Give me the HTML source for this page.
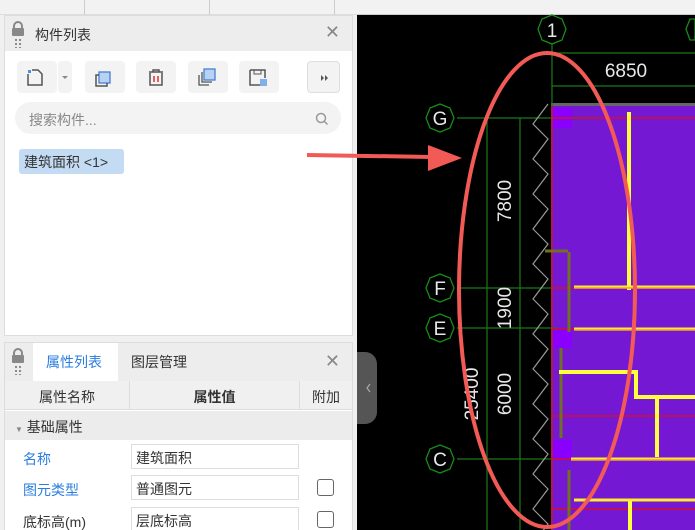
<!DOCTYPE html>
<html><head><meta charset="utf-8"><style>
*{box-sizing:border-box;margin:0;padding:0}
html,body{width:695px;height:530px;overflow:hidden}
body{background:#000;font-family:"Liberation Sans","Noto Sans CJK SC",sans-serif;position:relative;font-size:14px;color:#333}
.top{position:absolute;left:0;top:0;width:357px;height:15px;background:#f2f2f2;border-bottom:1px solid #ddd}
.top2{position:absolute;left:357px;top:0;width:338px;height:15px;background:#f2f2f2;border-bottom:1px solid #ccc}
.leftbg{position:absolute;left:0;top:15px;width:357px;height:515px;background:#f0f0f0}
.panel{position:absolute;left:4px;background:#fff;border:1px solid #ddd;overflow:hidden}
.hdr{height:35px;background:#ededed;position:relative}
.btn{position:absolute;top:45px;width:40px;height:32px;background:#f3f3f3;border-radius:4px}
.x{position:absolute;right:12px;font-size:18px;color:#888}
</style></head><body>
<div class="top"><div style="position:absolute;left:84px;top:0;width:1px;height:15px;background:#ccc"></div><div style="position:absolute;left:209px;top:0;width:1px;height:15px;background:#ccc"></div><div style="position:absolute;left:334px;top:0;width:1px;height:15px;background:#ccc"></div></div>
<div class="top2"></div>
<div class="leftbg"></div>
<div class="panel" style="top:15px;width:349px;height:321px">
 <div class="hdr">
  <div style="position:absolute;left:8px;top:5px;width:10px;height:8px;border:2px solid #888;border-bottom:none;border-radius:5px 5px 0 0"></div>
  <div style="position:absolute;left:7px;top:12px;width:12px;height:8px;background:#888;border-radius:1px"></div>
  <div style="position:absolute;left:9px;top:22px;width:9px;height:10px;background:radial-gradient(circle,#888 1px,transparent 1.3px) 0 0/4px 4px"></div>
  <div style="position:absolute;left:30px;top:9px;font-size:14px;color:#333">构件列表</div>
  <div class="x" style="top:6px">✕</div>
 </div>
 <div class="btn" style="left:12px;width:40px"><svg width="40" height="32"><rect x="11" y="9" width="3" height="3" fill="#4a90e2"/><path d="M11 13V24H25V13L21 9H15" fill="none" stroke="#555" stroke-width="1.5"/></svg></div>
 <div class="btn" style="left:53px;width:14px"><svg width="14" height="32"><path d="M4 15h6l-3 3z" fill="#888"/></svg></div>
 <div class="btn" style="left:80px"><svg width="40" height="32"><rect x="14" y="11" width="11" height="11" fill="#b8d2f5" stroke="#4a7fd0" stroke-width="1.3"/><path d="M14 14h-3v11h11v-3" fill="none" stroke="#555" stroke-width="1.5"/></svg></div>
 <div class="btn" style="left:131px"><svg width="40" height="32"><path d="M13 11h14M17 11v-2h6v2M14 12v12h12V12" fill="none" stroke="#555" stroke-width="1.5"/><path d="M18 15v6M22 15v6" stroke="#e03030" stroke-width="1.5"/></svg></div>
 <div class="btn" style="left:183px"><svg width="40" height="32"><rect x="16" y="8" width="11" height="11" fill="#b8d2f5" stroke="#4a7fd0" stroke-width="1.3"/><path d="M14 11v10h10M11 14v10h10" fill="none" stroke="#555" stroke-width="1.3"/></svg></div>
 <div class="btn" style="left:234px"><svg width="40" height="32"><path d="M11 9h15v8M11 9v15h10" fill="none" stroke="#555" stroke-width="1.5"/><rect x="15" y="9" width="7" height="4" fill="none" stroke="#555"/><rect x="21" y="18" width="7" height="7" fill="#7fb0ea"/></svg></div>
 <div class="btn" style="left:302px;width:33px;border:1px solid #ddd"><svg width="33" height="32"><path d="M13 13l3 3-3 3zM17 13l3 3-3 3z" fill="#555"/></svg></div>
 <div style="position:absolute;left:10px;top:86px;width:326px;height:32px;background:#f3f3f3;border-radius:16px"><span style="position:absolute;left:14px;top:8px;color:#888;font-size:14px">搜索构件...</span><svg style="position:absolute;right:12px;top:10px" width="14" height="14"><circle cx="6" cy="6" r="4.5" fill="none" stroke="#999" stroke-width="1.5"/><path d="M9.5 9.5l3 3" stroke="#999" stroke-width="1.5"/></svg></div>
 <div style="position:absolute;left:14px;top:133px;width:105px;height:25px;background:#c3dbf3;border-radius:3px;font-size:14px;padding:3px 0 0 5px;color:#333">建筑面积 &lt;1&gt;</div>
</div>
<div class="panel" style="top:342px;width:349px;height:188px;border-bottom:none">
 <div class="hdr" style="height:38px">
  <div style="position:absolute;left:8px;top:5px;width:10px;height:8px;border:2px solid #888;border-bottom:none;border-radius:5px 5px 0 0"></div>
  <div style="position:absolute;left:7px;top:12px;width:12px;height:8px;background:#888;border-radius:1px"></div>
  <div style="position:absolute;left:9px;top:22px;width:9px;height:10px;background:radial-gradient(circle,#888 1px,transparent 1.3px) 0 0/4px 4px"></div>
  <div style="position:absolute;left:28px;top:0;width:85px;height:38px;background:#fff;color:#2a7de1;padding:9px 0 0 13px">属性列表</div>
  <div style="position:absolute;left:126px;top:9px">图层管理</div>
  <div class="x" style="top:8px">✕</div>
 </div>
 <div style="position:absolute;left:0;top:38px;width:347px;height:29px;background:#f0f0f0;border-bottom:1px solid #ddd">
  <div style="position:absolute;left:0;width:125px;height:29px;border-right:1px solid #ddd;text-align:center;padding-top:6px">属性名称</div>
  <div style="position:absolute;left:125px;width:170px;height:29px;border-right:1px solid #ddd;text-align:center;padding-top:6px;font-weight:bold">属性值</div>
  <div style="position:absolute;left:295px;width:52px;text-align:center;padding-top:6px">附加</div>
 </div>
 <div style="position:absolute;left:0;top:68px;width:347px;height:29px;background:#ececec;padding:6px 0 0 10px"><span style="font-size:8px;color:#888">▼</span> 基础属性</div>
 <div style="position:absolute;left:18px;top:106px;color:#2a7de1">名称</div>
 <div style="position:absolute;left:126px;top:101px;width:168px;height:25px;border:1px solid #ddd;padding:3px 0 0 4px">建筑面积</div>
 <div style="position:absolute;left:18px;top:137px;color:#2a7de1">图元类型</div>
 <div style="position:absolute;left:126px;top:132px;width:168px;height:25px;border:1px solid #ddd;padding:3px 0 0 4px">普通图元</div>
 <div style="position:absolute;left:312px;top:136px;width:17px;height:17px;border:1px solid #666;border-radius:3px"></div>
 <div style="position:absolute;left:18px;top:169px">底标高(m)</div>
 <div style="position:absolute;left:126px;top:164px;width:168px;height:24px;border:1px solid #ddd;border-bottom:none;padding:3px 0 0 4px">层底标高</div>
 <div style="position:absolute;left:312px;top:168px;width:17px;height:17px;border:1px solid #666;border-radius:3px"></div>
</div>
<svg style="position:absolute;left:0;top:0" width="695" height="530">
 <path d="M357 352h8a12 12 0 0 1 12 12v48a12 12 0 0 1-12 12h-8z" fill="#555"/>
 <path d="M370 384l-3 4 3 4" fill="none" stroke="#aaa" stroke-width="1.2"/>
 <rect x="551" y="104" width="144" height="426" fill="#7518d4"/>
 <rect x="551" y="103" width="144" height="3" fill="#666"/>
 <rect x="552" y="108" width="20" height="20" fill="#8a00ff"/>
 <rect x="552" y="328" width="20" height="20" fill="#8a00ff"/>
 <rect x="552" y="440" width="20" height="20" fill="#8a00ff"/>
 <g stroke="#1a7a1a" stroke-width="1.2">
  <path d="M552 15v515M487 118v412M520 118v412M552 53h143M552 86h143M457 118h138M457 288h100M457 328h100M457 459h100"/>
 </g>
 <g stroke="#d01030" stroke-width="1.5"><path d="M552 118h143M552 288h143M552 329h143M552 416h143M552 459h143M552 509h143M552 106v424"/></g>
 <g stroke="#707020" stroke-width="3"><path d="M569 252v80M561 348v90M569 470v60"/><path d="M545 251h23"/></g>
 <g stroke="#ffff40" stroke-width="4" fill="none">
  <path d="M629 112v170M629 290v-60"/>
  <path d="M559 372h77v25h59M657 397v60M630 500v30"/>
 </g>
 <g stroke="#ffee30" stroke-width="3"><path d="M574 287h121M574 329h121M571 459h124M574 500h121"/></g>
 <g stroke="#f8a030" stroke-width="1.5"><path d="M574 288h121M574 330h121M571 460h124"/></g>
 <path d="M548 104l-15 20 15 15-15 20 15 15-15 20 15 15-15 20 15 15-15 20 15 15-15 20 15 15-15 20 15 15-15 20 15 15-15 20 15 15-15 20 15 15-15 20 15 15-15 20 15 15-15 20 15 15-15 20" fill="none" stroke="#999" stroke-width="1.2"/>
 <g fill="#000" stroke="#1a8a1a" stroke-width="1.3">
  <polygon points="552,15 562,19 566,29 562,40 552,44 542,40 538,29 542,19"/>
  <polygon points="695,19 695,40 690,40 686,29 690,19"/>
  <polygon points="440,104 450,108 454,118 450,128 440,132 430,128 426,118 430,108"/>
  <polygon points="440,274 450,278 454,288 450,298 440,302 430,298 426,288 430,278"/>
  <polygon points="440,314 450,318 454,328 450,338 440,342 430,338 426,328 430,318"/>
  <polygon points="440,445 450,449 454,459 450,469 440,473 430,469 426,459 430,449"/>
 </g>
 <g fill="#e8e8e8" font-family="Liberation Sans,sans-serif" font-size="19" text-anchor="middle">
  <text x="552" y="37">1</text><text x="440" y="125">G</text><text x="440" y="295">F</text><text x="440" y="335">E</text><text x="440" y="466">C</text>
  <text x="626" y="77">6850</text>
  <text transform="translate(511,201) rotate(-90)">7800</text>
  <text transform="translate(511,308) rotate(-90)">1900</text>
  <text transform="translate(511,394) rotate(-90)">6000</text>
  <text transform="translate(478,394) rotate(-90)">25400</text>
 </g>
 <ellipse cx="547" cy="290" rx="88" ry="237" fill="none" stroke="#f25a55" stroke-width="4"/>
 <path d="M307 155L432 157" stroke="#f25a55" stroke-width="4"/>
 <path d="M428 145L462 158L428 171z" fill="#f25a55"/>
</svg>
</body></html>
